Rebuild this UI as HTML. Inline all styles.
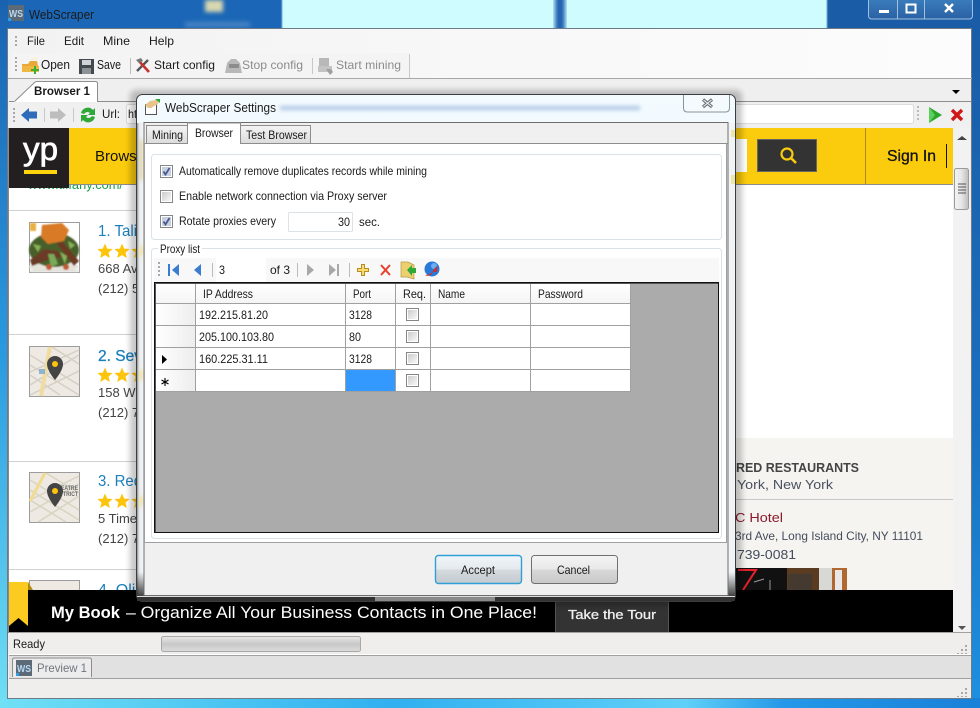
<!DOCTYPE html>
<html><head><meta charset="utf-8"><title>WebScraper</title>
<style>
html,body{margin:0;padding:0;width:980px;height:708px;overflow:hidden;background:#fff}
svg{display:block}
text{font-family:"Liberation Sans",sans-serif;font-size:12px;fill:#1a1a1a}
.g{fill:#8c8c8c}
.w{font-size:13px;fill:#444}
.b{fill:#1b80bd;font-size:16px}
</style></head><body>
<svg width="980" height="708" viewBox="0 0 980 708" xmlns="http://www.w3.org/2000/svg">
<defs>
<linearGradient id="lf" x1="0" y1="0" x2="0" y2="1"><stop offset="0" stop-color="#1a62b0"/><stop offset=".5" stop-color="#2a9ae0"/><stop offset="1" stop-color="#70e0f5"/></linearGradient>
<linearGradient id="rf" x1="0" y1="0" x2="0" y2="1"><stop offset="0" stop-color="#1a5ba5"/><stop offset=".6" stop-color="#1a70c0"/><stop offset="1" stop-color="#1e90e0"/></linearGradient>
<linearGradient id="bf" x1="0" y1="0" x2="1" y2="0"><stop offset="0" stop-color="#70e0f5"/><stop offset=".4" stop-color="#30b0f0"/><stop offset=".7" stop-color="#60d0f8"/><stop offset=".8" stop-color="#2498e8"/><stop offset="1" stop-color="#1a80d8"/></linearGradient>
<linearGradient id="mn" x1="0" y1="0" x2="1" y2="0"><stop offset="0" stop-color="#f2f2f2"/><stop offset=".5" stop-color="#f8f8f8"/><stop offset="1" stop-color="#fcfcfc"/></linearGradient>
<linearGradient id="btn" x1="0" y1="0" x2="0" y2="1"><stop offset="0" stop-color="#f4f4f4"/><stop offset=".5" stop-color="#e8e8e8"/><stop offset=".51" stop-color="#d8d8d8"/><stop offset="1" stop-color="#c8c8c8"/></linearGradient>
<linearGradient id="btn2" x1="0" y1="0" x2="0" y2="1"><stop offset="0" stop-color="#f0f6fa"/><stop offset=".5" stop-color="#e4e9ec"/><stop offset=".51" stop-color="#d4dade"/><stop offset="1" stop-color="#c4cbd0"/></linearGradient>
<linearGradient id="chk" x1="0" y1="0" x2="1" y2="1"><stop offset="0" stop-color="#cccccc"/><stop offset="1" stop-color="#f8f8f8"/></linearGradient>
<linearGradient id="sc" x1="0" y1="0" x2="1" y2="0"><stop offset="0" stop-color="#f4f4f4"/><stop offset=".5" stop-color="#e6e6e6"/><stop offset="1" stop-color="#bdbdbd"/></linearGradient>
<linearGradient id="pr" x1="0" y1="0" x2="0" y2="1"><stop offset="0" stop-color="#e8e8e8"/><stop offset=".5" stop-color="#c8c8c8"/><stop offset="1" stop-color="#dcdcdc"/></linearGradient>
<linearGradient id="gl" x1="0" y1="0" x2="0" y2="1"><stop offset="0" stop-color="#f4fbff"/><stop offset=".5" stop-color="#e2f3fb"/><stop offset="1" stop-color="#ffffff"/></linearGradient>
<linearGradient id="gll" x1="0" y1="0" x2="1" y2="0"><stop offset="0" stop-color="#909090"/><stop offset=".3" stop-color="#e4e8ec"/><stop offset="1" stop-color="#f8f8f8"/></linearGradient>
<linearGradient id="dk" x1="0" y1="0" x2="0" y2="1"><stop offset="0" stop-color="#222" stop-opacity="0"/><stop offset="1" stop-color="#222" stop-opacity=".85"/></linearGradient>
<linearGradient id="tab" x1="0" y1="0" x2="0" y2="1"><stop offset="0" stop-color="#f4f4f4"/><stop offset="1" stop-color="#dcdcdc"/></linearGradient>
<linearGradient id="hd" x1="0" y1="0" x2="0" y2="1"><stop offset="0" stop-color="#ffffff"/><stop offset="1" stop-color="#f4f4f4"/></linearGradient>
<linearGradient id="rh" x1="0" y1="0" x2="1" y2="0"><stop offset="0" stop-color="#ffffff"/><stop offset="1" stop-color="#ededed"/></linearGradient>
<linearGradient id="ti" x1="0" y1="0" x2="0" y2="1"><stop offset="0" stop-color="#3d80c0"/><stop offset="1" stop-color="#2a62a4"/></linearGradient>
<filter id="bl" x="-20%" y="-100%" width="140%" height="300%"><feGaussianBlur stdDeviation="2"/></filter>
<filter id="bs" x="-20%" y="-20%" width="140%" height="140%"><feGaussianBlur stdDeviation="3"/></filter>
<filter id="b1" x="-10%" y="-10%" width="120%" height="120%"><feGaussianBlur stdDeviation=".7"/></filter>
<path id="star" d="M0-7.500 2.200-2.400 7.600-2 3.500 1.600 4.800 7 0 4.100-4.800 7-3.500 1.600-7.600-2-2.200-2.400Z" fill="#fdc40c"/>
<g id="cb"><rect x=".5" y=".5" width="12" height="12" fill="#fff" stroke="#858686"/><rect x="2" y="2" width="9" height="9" fill="url(#chk)"/></g>
<g id="cbc"><rect x=".5" y=".5" width="12" height="12" fill="#fff" stroke="#858686"/><rect x="2" y="2" width="9" height="9" fill="#c8cfe0"/><path d="M3.500 6.500 5.500 9.500 9.500 3" fill="none" stroke="#4a5a90" stroke-width="1.800"/></g>
<g id="ws"><rect width="16" height="16" fill="#5c6a78"/><text x="1" y="12" style="font-size:10px;font-weight:bold;fill:#b8d8f0" textLength="14" lengthAdjust="spacingAndGlyphs">WS</text><path d="M0 13h3v3H0z" fill="#2aa0e8"/></g>
</defs>

<!-- desktop & window frame -->
<rect width="980" height="708" fill="#1a5ca6"/>
<rect x="0" y="0" width="283" height="28" fill="#1b66b6"/>
<rect x="282" y="-6" width="545" height="40" fill="#cffdff" filter="url(#b1)"/>
<rect x="555" y="-6" width="10" height="40" fill="#2264b0" filter="url(#bl)"/>
<rect x="205" y="0" width="18" height="12" fill="#d8d8b0" filter="url(#bl)"/>
<rect x="185" y="22" width="65" height="5" fill="#4a84c4" filter="url(#bl)"/>
<rect x="0" y="0" width="8" height="708" fill="url(#lf)"/>
<rect x="972" y="0" width="8" height="708" fill="url(#rf)"/>
<rect x="0" y="698" width="980" height="10" fill="url(#bf)"/>
<rect x="868.500" y="-4" width="104" height="23" rx="3" fill="url(#ti)" stroke="#9fc0e0"/>
<path d="M897.500 0v19M924.500 0v19" stroke="#9fc0e0"/>
<rect x="879" y="10" width="10" height="3" fill="#fff"/>
<rect x="906.500" y="4.500" width="9" height="8" fill="none" stroke="#fff" stroke-width="2"/>
<path d="M945 4l8 8M953 4l-8 8" stroke="#fff" stroke-width="2.400"/>
<use href="#ws" x="8" y="5"/>
<text x="29" y="19" style="font-size:13px" textLength="65" lengthAdjust="spacingAndGlyphs">WebScraper</text>

<!-- client area -->
<rect x="8" y="28" width="964" height="670" fill="#f0eeec"/>
<rect x="7.500" y="28.500" width="964" height="670" fill="none" stroke="#6e7a86"/>
<rect x="8" y="29" width="963" height="49" fill="url(#mn)"/>
<!-- menu -->
<path d="M15 36h2v2h-2zM15 40h2v2h-2zM15 44h2v2h-2z" fill="#a8a8a8"/>
<text x="27" y="45" textLength="18" lengthAdjust="spacingAndGlyphs">File</text>
<text x="64" y="45" textLength="20" lengthAdjust="spacingAndGlyphs">Edit</text>
<text x="103" y="45" textLength="27" lengthAdjust="spacingAndGlyphs">Mine</text>
<text x="149" y="45" textLength="25" lengthAdjust="spacingAndGlyphs">Help</text>
<!-- toolbar -->
<rect x="11" y="53" width="399" height="25" rx="2" fill="#f4f4f4"/>
<path d="M15 57h2v2h-2zM15 61h2v2h-2zM15 65h2v2h-2zM15 69h2v2h-2z" fill="#a8a8a8"/>
<path d="M22 64h6l2-3h7l2 10H22z" fill="#e8a93a"/><path d="M22 66h17v6H22z" fill="#f0b840"/><path d="M28 60l8-3 2 3z" fill="#f8f0d8"/><path d="M31 69h3v-3h2v3h3v2h-3v3h-2v-3h-3z" fill="#3cb034"/>
<path d="M79 59h15v15H79z" fill="#454a50"/><rect x="82" y="60" width="9" height="5" fill="#cfd4d8"/><rect x="82" y="68" width="9" height="6" fill="#8c9296"/>
<text x="41" y="69" style="font-size:12.500px" textLength="29" lengthAdjust="spacingAndGlyphs">Open</text>
<text x="97" y="69" style="font-size:12.500px" textLength="24" lengthAdjust="spacingAndGlyphs">Save</text>
<path d="M130.500 58v16" stroke="#bcbcbc"/>
<path d="M137 71l11-11" stroke="#555" stroke-width="2.400"/><path d="M138 60l11 12" stroke="#c83030" stroke-width="2.600"/><path d="M136 60l5-2 2 3-4 2z" fill="#777"/>
<text x="154" y="69" textLength="61" lengthAdjust="spacingAndGlyphs">Start config</text>
<path d="M225 73l2-10 4-4h5l4 4 2 10z" fill="#b8b8b8"/><rect x="229" y="64" width="10" height="4" fill="#8c8c8c"/>
<text class="g" x="242" y="69" textLength="61" lengthAdjust="spacingAndGlyphs">Stop config</text>
<path d="M312.500 58v16" stroke="#c8c8c8"/>
<rect x="319" y="58" width="10" height="9" fill="#b8b8b8"/><rect x="318" y="66" width="14" height="6" fill="#c4c4c4"/><path d="M326 69h5l2 3-3 3z" fill="#a0a0a0"/>
<text class="g" x="336" y="69" textLength="65" lengthAdjust="spacingAndGlyphs">Start mining</text>
<path d="M409.500 54v24" stroke="#c8c8c8"/>
<path d="M8 78.500h964" stroke="#a8a8a8"/>
<!-- tab strip -->
<rect x="9" y="79" width="962" height="23" fill="#efefef"/>
<path d="M9 101.500h5M97 101.500h874" fill="none" stroke="#8d8d8d"/>
<path d="M15 102l20-20h62v20z" fill="#fff"/>
<path d="M14.500 101.500l20-19q1-1 3-1h58q2 0 2 2v18" fill="none" stroke="#8d8d8d"/>
<text x="34" y="95" style="font-weight:bold" textLength="56" lengthAdjust="spacingAndGlyphs">Browser 1</text>
<path d="M952 90h8l-4 4z" fill="#000"/>
<!-- url bar -->
<rect x="9" y="102" width="962" height="26" fill="#f0f0f0"/>
<path d="M13 108h2v2h-2zM13 112h2v2h-2zM13 116h2v2h-2zM13 120h2v2h-2z" fill="#a8a8a8"/>
<path d="M21 115l8-7v3.500h8v7h-8v3.500z" fill="#2c6cb8"/>
<path d="M66 115l-8-7v3.500h-8v7h8v3.500z" fill="#bdbdbd"/>
<path d="M44.500 108v14M73.500 108v14" stroke="#c8c8c8"/>
<path d="M81 113a7 7 0 0 1 12-3l2-2v7h-7l2-2a4 4 0 0 0-6 1z" fill="#2fa83a"/><path d="M95 117a7 7 0 0 1-12 3l-2 2v-7h7l-2 2a4 4 0 0 0 6-1z" fill="#2fa83a"/>
<text x="102" y="118" textLength="18" lengthAdjust="spacingAndGlyphs">Url:</text>
<rect x="126.500" y="104.500" width="787" height="19" rx="2" fill="#fff" stroke="#dcdcdc"/>
<text x="128" y="118" textLength="9" lengthAdjust="spacingAndGlyphs">ht</text>
<path d="M918 106v2M918 110v2M918 114v2M918 118v2" stroke="#aaa" stroke-width="1.500"/>
<path d="M929 107l13 8-13 8z" fill="#2ca62c"/><path d="M929 107l6 8-6 8z" fill="#5cd05c"/>
<path d="M952 110l10 10M962 110l-10 10" stroke="#d01818" stroke-width="3.400"/>

<!-- page -->
<rect x="9" y="128" width="944" height="505" fill="#fff"/>
<rect x="736" y="438" width="217" height="152" fill="#f5f4f0"/>
<text x="28" y="189" style="font-size:13px;fill:#1ba04a" textLength="95" lengthAdjust="spacingAndGlyphs">www.tiffany.com/</text>
<!-- header -->
<rect x="9" y="128" width="944" height="56" fill="#fbcb0d"/>
<path d="M9 184.500h944" stroke="#8c8c8c"/>
<rect x="9" y="128" width="60" height="60" fill="#231f20"/>
<text x="23" y="160" style="font-size:32px;fill:#fff;stroke:#fff;stroke-width:.7px" textLength="35" lengthAdjust="spacingAndGlyphs">yp</text>
<rect x="24" y="170" width="33" height="4" fill="#fdd30b"/>
<text x="95" y="161" style="font-size:15px;fill:#111" textLength="50" lengthAdjust="spacingAndGlyphs">Browse</text>
<rect x="600" y="139" width="147" height="33" fill="#fff"/>
<rect x="757.500" y="139.500" width="59" height="32" fill="#333" stroke="#666"/>
<circle cx="787" cy="154" r="5.500" fill="none" stroke="#fbcb0d" stroke-width="2.200"/><path d="M791 158l5 5" stroke="#fbcb0d" stroke-width="2.600"/>
<path d="M865.500 128v56" stroke="#b08a10"/>
<text x="887" y="161" style="font-size:16px;fill:#111;stroke:#111;stroke-width:.3px" textLength="49" lengthAdjust="spacingAndGlyphs">Sign In</text>
<path d="M946.500 144v24" stroke="#111"/>
<!-- list -->
<path d="M9 210.500h720M9 334.500h720M9 461.500h720M9 569.500h720" stroke="#d0d0d0"/>
<rect x="29" y="222" width="51" height="51" fill="#9c9c9c"/>
<rect x="30" y="223" width="49" height="49" fill="#fff"/>
<g filter="url(#b1)">
<path d="M30 223h6v8h-6z" fill="#e8b040"/>
<ellipse cx="54" cy="267" rx="25" ry="5" fill="#e6e4dc"/>
<ellipse cx="54" cy="250" rx="25" ry="17" fill="#46602c"/>
<path d="M42 225l20-2 7 7-5 11-16 3-7-7z" fill="#d87a28"/>
<path d="M30 260l14-11 14 2 4 6-14 3-16 6z" fill="#6a3a26"/>
<path d="M56 243l7-1 16 19-5 5z" fill="#6a3a24"/>
<path d="M48 254h6l4 10-7 3z" fill="#78aa58"/>
<path d="M33 244l8 2-3 6zM60 252l7 4-2 8zM68 241l7 4-5 4z" fill="#88b058"/>
<circle cx="49" cy="267" r="3" fill="#c05a30"/><circle cx="66" cy="267" r="3" fill="#c05a30"/>
<path d="M30 270h49v2H30z" fill="#e0e0da"/>
</g>
<rect x="29.500" y="346.500" width="50" height="50" fill="#eee9e2" stroke="#9c9c9c"/>
<g stroke="#d4d0c6" stroke-width="1.500"><path d="M30 355l49 30M30 365l49 30M30 375l30 20M52 347l27 17M30 385l49-30M30 372l49-22M30 395l49-24"/></g>
<path d="M50 347l-9 49" stroke="#f0dca0" stroke-width="4"/>
<rect x="39" y="369" width="6" height="5" fill="#8fb4d0"/>
<path d="M55 380Q47 370 47 364a8 8 0 1 1 16 0Q63 370 55 380z" fill="#444"/><circle cx="55" cy="364" r="3" fill="#fdc40c"/>
<rect x="29.500" y="472.500" width="50" height="50" fill="#eee9e2" stroke="#9c9c9c"/>
<g stroke="#d8d4c0" stroke-width="1.500"><path d="M30 480l49 30M30 490l49 30M30 500l36 22M46 473l33 20M30 512l49-28M30 500l49-24M38 522l41-26"/></g>
<path d="M45 473l-15 28" stroke="#f0dc90" stroke-width="3"/>
<text x="61" y="490" style="font-size:6px;fill:#666;font-weight:bold" textLength="17" lengthAdjust="spacingAndGlyphs">EATRE</text>
<text x="63" y="496" style="font-size:6px;fill:#666;font-weight:bold" textLength="15" lengthAdjust="spacingAndGlyphs">TRICT</text>
<path d="M55 507Q47 497 47 491a8 8 0 1 1 16 0Q63 497 55 507z" fill="#444"/><circle cx="55" cy="491" r="3" fill="#fdc40c"/>
<rect x="29.500" y="580.500" width="50" height="20" fill="#eee9e2" stroke="#9c9c9c"/>
<text class="b" x="98" y="236" textLength="39" lengthAdjust="spacingAndGlyphs">1. Tali</text>
<use href="#star" x="105" y="251"/><use href="#star" x="122" y="251"/><use href="#star" x="139" y="251"/>
<text class="w" x="98" y="273">668 Av</text><text class="w" x="98" y="293">(212) 5</text>
<text class="b" x="98" y="361" style="stroke:#1b80bd;stroke-width:.3px" textLength="44" lengthAdjust="spacingAndGlyphs">2. Sev</text>
<use href="#star" x="105" y="375"/><use href="#star" x="122" y="375"/><use href="#star" x="139" y="375"/>
<text class="w" x="98" y="397">158 W</text><text class="w" x="98" y="417">(212) 7</text>
<text class="b" x="98" y="486" textLength="44" lengthAdjust="spacingAndGlyphs">3. Red</text>
<use href="#star" x="105" y="501"/><use href="#star" x="122" y="501"/><use href="#star" x="139" y="501"/>
<text class="w" x="98" y="523">5 Time</text><text class="w" x="98" y="543">(212) 7</text>
<text class="b" x="98" y="595">4. Oli</text>
<!-- right col -->
<path d="M736 499.500h217" stroke="#c8c8c8"/>
<text x="736" y="472" style="font-size:13px;font-weight:bold;fill:#444" textLength="123" lengthAdjust="spacingAndGlyphs">RED RESTAURANTS</text>
<text x="737" y="489" style="font-size:13px;fill:#4a5060" textLength="96" lengthAdjust="spacingAndGlyphs">York, New York</text>
<text x="735" y="522" style="font-size:13px;fill:#8a1a2c" textLength="48" lengthAdjust="spacingAndGlyphs">C Hotel</text>
<text x="735" y="540" style="font-size:12px;fill:#444c5c" textLength="188" lengthAdjust="spacingAndGlyphs">3rd Ave, Long Island City, NY 11101</text>
<text x="737" y="559" style="font-size:13px;fill:#444c5c" textLength="59" lengthAdjust="spacingAndGlyphs">739-0081</text>
<rect x="736" y="568" width="111" height="22" fill="#111"/>
<path d="M738 570h18l-13 20" fill="none" stroke="#e8202c" stroke-width="2"/>
<path d="M754 582l10-3M770 580v10" stroke="#999"/>
<rect x="787" y="568" width="32" height="22" fill="#5a3c22"/><rect x="788" y="574" width="24" height="16" fill="#453a30"/><rect x="819" y="568" width="13" height="22" fill="#d8d8d4"/><rect x="832" y="568" width="15" height="22" fill="#b06830"/><rect x="835" y="570" width="7" height="20" fill="#e8e8e8"/>
<!-- bottom bar -->
<rect x="9" y="590" width="944" height="43" fill="#000"/>
<path d="M9 582h19v44l-9.500-8L9 626z" fill="#fbcb22"/><path d="M28 582l5 8h-5z" fill="#b08a10"/>
<text x="51" y="618" style="font-size:17px;font-weight:bold;fill:#fff" textLength="69" lengthAdjust="spacingAndGlyphs">My Book</text>
<text x="126" y="618" style="font-size:17px;fill:#fff" textLength="411" lengthAdjust="spacingAndGlyphs">– Organize All Your Business Contacts in One Place!</text>
<rect x="555.500" y="600.500" width="113" height="32" fill="#333" stroke="#555"/>
<text x="568" y="619" style="font-size:13px;fill:#f0f0f0;stroke:#f0f0f0;stroke-width:.3px" textLength="88" lengthAdjust="spacingAndGlyphs">Take the Tour</text>
<!-- scrollbar -->
<rect x="953" y="128" width="17" height="505" fill="#f2f2f2"/>
<path d="M957 140h10l-5-4z" fill="#444"/>
<rect x="954.500" y="168.500" width="14" height="41" rx="2" fill="url(#sc)" stroke="#9a9a9a"/>
<path d="M958 184h8M958 187h8M958 190h8M958 193h8" stroke="#555"/>
<path d="M958 626h8l-4 4z" fill="#555"/>
<path d="M8.500 128v505" stroke="#8a8a8a"/>
<!-- status -->
<rect x="9" y="633" width="962" height="22" fill="#f0eeec"/>
<path d="M9 632.500h962M9 655.500h962" stroke="#a0a0a0"/>
<path d="M9 654.500h962" stroke="#fff"/>
<text x="13" y="648" textLength="32" lengthAdjust="spacingAndGlyphs">Ready</text>
<rect x="161.500" y="636.500" width="199" height="15" rx="2" fill="url(#pr)" stroke="#a8a8a8"/>
<path d="M965 645h2v2h-2zM961 649h2v2h-2zM965 649h2v2h-2zM957 653h2v1h-2zM961 653h2v1h-2zM965 653h2v1h-2z" fill="#a8a8a8"/>
<!-- preview tab row -->
<rect x="9" y="656" width="962" height="22" fill="#e1e1e1"/>
<path d="M12.500 677v-17q0-2 2-2h75q2 0 2 2v17" fill="#ececec" stroke="#8d8d8d"/>
<use href="#ws" x="16" y="660"/>
<text x="37" y="672" style="fill:#70767c" textLength="50" lengthAdjust="spacingAndGlyphs">Preview 1</text>
<path d="M9 678.500h962" stroke="#a0a0a0"/>
<rect x="9" y="679" width="962" height="19" fill="#f0eeec"/>
<path d="M965 688h2v2h-2zM961 692h2v2h-2zM965 692h2v2h-2zM957 696h2v1h-2zM961 696h2v1h-2zM965 696h2v1h-2z" fill="#a8a8a8"/>

<!-- dialog -->
<rect x="130" y="90" width="612" height="516" rx="6" fill="#000" opacity=".22" filter="url(#bs)"/>
<rect x="136.500" y="94.500" width="599" height="507" rx="6" fill="url(#gl)" stroke="#3c3c3c"/>
<rect x="137" y="123" width="7" height="473" fill="url(#gll)"/>
<rect x="728" y="123" width="7" height="473" fill="#f0f4f6"/>
<!-- content showing through the glass frame -->
<rect x="139" y="140" width="4" height="40" fill="#d8c060" opacity=".55" filter="url(#bl)"/>
<rect x="139" y="246" width="4" height="10" fill="#f0d860" opacity=".6" filter="url(#bl)"/>
<rect x="139" y="370" width="4" height="10" fill="#f0d860" opacity=".6" filter="url(#bl)"/>
<rect x="139" y="496" width="4" height="10" fill="#f0d860" opacity=".6" filter="url(#bl)"/>
<rect x="731" y="130" width="4" height="7" fill="#f0e080" opacity=".7"/>
<rect x="731" y="175" width="4" height="9" fill="#f0e080" opacity=".7"/>
<rect x="137" y="572" width="7" height="24" fill="url(#dk)"/>
<rect x="728" y="572" width="7" height="24" fill="url(#dk)"/>
<rect x="137" y="597" width="598" height="4" fill="#333"/>
<rect x="137" y="596" width="598" height="1" fill="#dcdcdc"/>
<rect x="375" y="597" width="120" height="4" fill="#8a8a8a"/>
<rect x="280" y="106" width="360" height="4" fill="#7aa0d0" filter="url(#bl)" opacity=".6"/>
<path d="M144 122.500h584v473H144z" fill="#f0f0f0" stroke="#6e6e6e"/>
<path d="M683.500 95v13q0 4 4 4h38q4 0 4-4v-13" fill="#f4fafd" stroke="#8a949c"/>
<path d="M703 99.500l9 7.500M712 99.500l-9 7.500" stroke="#6a7078" stroke-width="3.200"/><path d="M703.500 100l8 6.500M711.500 100l-8 6.500" stroke="#f4f4f4" stroke-width="1"/>
<!-- dialog icon -->
<rect x="145.500" y="104.500" width="11" height="10" fill="#fff" stroke="#555"/><path d="M145 105l5-4 6-1h3l-1 4-7 4-3 0z" fill="#e8c48a"/><path d="M155 99h5v4z" fill="#2fa83a"/>
<text x="165" y="112" textLength="111" lengthAdjust="spacingAndGlyphs" style="font-size:13px">WebScraper Settings</text>
<!-- tabs -->
<rect x="146.500" y="125.500" width="41" height="18" fill="url(#tab)" stroke="#8d8d8d"/>
<rect x="240.500" y="125.500" width="70" height="18" fill="url(#tab)" stroke="#8d8d8d"/>
<path d="M144 143.500h584" stroke="#8d8d8d"/>
<path d="M187.500 144v-21h53v21" fill="#fff" stroke="#8d8d8d"/>
<rect x="188" y="124" width="52" height="20" fill="#fff"/>
<text x="152" y="139" textLength="31" lengthAdjust="spacingAndGlyphs">Mining</text>
<text x="195" y="137" textLength="38" lengthAdjust="spacingAndGlyphs">Browser</text>
<text x="246" y="139" textLength="61" lengthAdjust="spacingAndGlyphs">Test Browser</text>
<!-- tab page -->
<rect x="145" y="144" width="582" height="398" fill="#fff"/>
<path d="M144.500 143.500v399h582v-399" fill="none" stroke="#a0a0a0"/>
<rect x="151.500" y="154.500" width="570" height="85" rx="3" fill="#fff" stroke="#d8e2e8"/>
<use href="#cbc" x="160" y="165"/><use href="#cb" x="160" y="190"/><use href="#cbc" x="160" y="215"/>
<text x="179" y="175" textLength="248" lengthAdjust="spacingAndGlyphs">Automatically remove duplicates records while mining</text>
<text x="179" y="200" textLength="208" lengthAdjust="spacingAndGlyphs">Enable network connection via Proxy server</text>
<text x="179" y="225" textLength="97" lengthAdjust="spacingAndGlyphs">Rotate proxies every</text>
<rect x="288.500" y="212.500" width="64" height="19" rx="1" fill="#fff" stroke="#dce2e6"/>
<text x="338" y="226" textLength="12" lengthAdjust="spacingAndGlyphs">30</text>
<text x="359" y="226" textLength="21" lengthAdjust="spacingAndGlyphs">sec.</text>
<rect x="151.500" y="248.500" width="570" height="290" rx="3" fill="#fff" stroke="#d8e2e8"/>
<rect x="158" y="244" width="44" height="10" fill="#fff"/>
<text x="160" y="253" textLength="40" lengthAdjust="spacingAndGlyphs">Proxy list</text>
<!-- nav toolbar -->
<rect x="154" y="258" width="565" height="24" fill="#f8f8f8"/>
<rect x="216" y="258" width="50" height="24" fill="#fff"/>
<path d="M158 262h2v2h-2zM158 266h2v2h-2zM158 270h2v2h-2zM158 274h2v2h-2z" fill="#a8a8a8"/>
<path d="M168 264h2v12h-2zM179 264v12l-7-6z" fill="#3a7cd0"/>
<path d="M201 264v12l-7-6z" fill="#3a7cd0"/>
<path d="M212.500 263v14M297.500 263v14M349.500 263v14" stroke="#bcbcbc"/>
<text x="219" y="274" textLength="6" lengthAdjust="spacingAndGlyphs">3</text>
<text x="270" y="274" textLength="20" lengthAdjust="spacingAndGlyphs">of 3</text>
<path d="M307 264v12l7-6z" fill="#a8a8a8"/>
<path d="M329 264v12l7-6zM337 264h2v12h-2z" fill="#a8a8a8"/>
<path d="M361.500 264.500h3v4h4v3h-4v4h-3v-4h-4v-3h4z" fill="#f8dc70" stroke="#b88c20"/>
<path d="M381 265l9 10M390 265l-9 10" stroke="#e8402c" stroke-width="2"/>
<path d="M401 262h7l6 3v14l-7-2h-6z" fill="#ecd070" stroke="#b89840" stroke-width=".7"/><path d="M407 270l5-5v3h4v5h-4v3z" fill="#2fa83a"/>
<circle cx="432" cy="269" r="7.500" fill="#2a78d8"/><circle cx="434" cy="266" r="3" fill="#6ab0f0"/><path d="M425 275c4 0 8-2 9-6l3-3 0 6-4 0c-1 3-5 5-8 3z" fill="#c83030"/>
<!-- grid -->
<rect x="154.500" y="282.500" width="564" height="250" fill="#ababab" stroke="#111"/>
<path d="M155.500 283v249M155 283.500h563" stroke="#555"/>
<rect x="156" y="284" width="475" height="20" fill="url(#hd)"/>
<rect x="156" y="304" width="39" height="88" fill="url(#rh)"/>
<rect x="195" y="304" width="436" height="88" fill="#fff"/>
<rect x="346" y="370" width="49" height="21" fill="#3399ff"/>
<path d="M156 303.500h475M156 325.500h475M156 347.500h475M156 369.500h475M156 391.500h475M195.500 284v108M345.500 284v108M395.500 284v108M430.500 284v108M530.500 284v108M630.500 284v108" stroke="#a0a0a0"/>
<text x="203" y="298" textLength="50" lengthAdjust="spacingAndGlyphs">IP Address</text>
<text x="353" y="298" textLength="18" lengthAdjust="spacingAndGlyphs">Port</text>
<text x="403" y="298" textLength="23" lengthAdjust="spacingAndGlyphs">Req.</text>
<text x="438" y="298" textLength="27" lengthAdjust="spacingAndGlyphs">Name</text>
<text x="538" y="298" textLength="45" lengthAdjust="spacingAndGlyphs">Password</text>
<text x="199" y="319" textLength="69" lengthAdjust="spacingAndGlyphs">192.215.81.20</text>
<text x="349" y="319" textLength="23" lengthAdjust="spacingAndGlyphs">3128</text>
<text x="199" y="341" textLength="75" lengthAdjust="spacingAndGlyphs">205.100.103.80</text>
<text x="349" y="341" textLength="12" lengthAdjust="spacingAndGlyphs">80</text>
<text x="199" y="363" textLength="69" lengthAdjust="spacingAndGlyphs">160.225.31.11</text>
<text x="349" y="363" textLength="23" lengthAdjust="spacingAndGlyphs">3128</text>
<use href="#cb" x="406" y="308"/><use href="#cb" x="406" y="330"/><use href="#cb" x="406" y="352"/><use href="#cb" x="406" y="374"/>
<path d="M162 355v9l5-4.500z" fill="#000"/>
<path d="M165 378v8M161.500 380l7 4M168.500 380l-7 4" stroke="#000" stroke-width="1.100"/>
<!-- buttons -->
<rect x="435.500" y="555.500" width="86" height="28" rx="3" fill="url(#btn2)" stroke="#2f9fd6" stroke-width="1.400"/>
<text x="461" y="574" textLength="34" lengthAdjust="spacingAndGlyphs">Accept</text>
<rect x="531.500" y="555.500" width="86" height="28" rx="3" fill="url(#btn)" stroke="#707070"/>
<text x="557" y="574" textLength="33" lengthAdjust="spacingAndGlyphs">Cancel</text>
</svg>
</body></html>
